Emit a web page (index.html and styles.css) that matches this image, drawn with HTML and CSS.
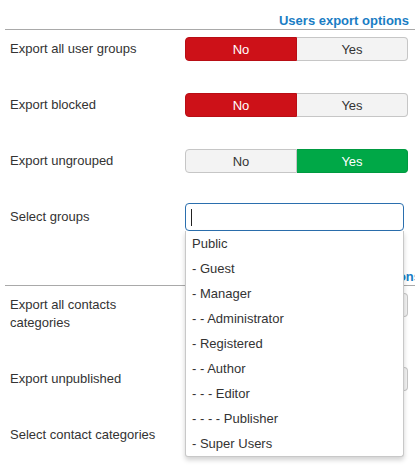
FILE: index.html
```html
<!DOCTYPE html>
<html>
<head>
<meta charset="utf-8">
<link rel="stylesheet" href="styles.css">
</head>
<body>
<div class="page">
  <section class="panel">
    <h3 class="legend">Users export options</h3>
    <div class="rows">
      <div class="row">
        <div class="label">Export all user groups</div>
        <div class="control">
          <div class="toggle"><span class="opt no">No</span><span class="opt">Yes</span></div>
        </div>
      </div>
      <div class="row">
        <div class="label">Export blocked</div>
        <div class="control">
          <div class="toggle"><span class="opt no">No</span><span class="opt">Yes</span></div>
        </div>
      </div>
      <div class="row">
        <div class="label">Export ungrouped</div>
        <div class="control">
          <div class="toggle"><span class="opt">No</span><span class="opt yes">Yes</span></div>
        </div>
      </div>
      <div class="row">
        <div class="label">Select groups</div>
        <div class="control">
          <div class="select">
            <div class="input focus"><span class="caret"></span></div>
            <ul class="dropdown">
              <li>Public</li>
              <li>- Guest</li>
              <li>- Manager</li>
              <li>- - Administrator</li>
              <li>- Registered</li>
              <li>- - Author</li>
              <li>- - - Editor</li>
              <li>- - - - Publisher</li>
              <li>- Super Users</li>
            </ul>
          </div>
        </div>
      </div>
    </div>
  </section>
  <section class="panel panel-second">
    <h3 class="legend">Contacts export options</h3>
    <div class="rows">
      <div class="row">
        <div class="label">Export all contacts categories</div>
        <div class="control">
          <div class="toggle"><span class="opt no">No</span><span class="opt">Yes</span></div>
        </div>
      </div>
      <div class="row">
        <div class="label">Export unpublished</div>
        <div class="control">
          <div class="toggle"><span class="opt no">No</span><span class="opt">Yes</span></div>
        </div>
      </div>
      <div class="row">
        <div class="label">Select contact categories</div>
        <div class="control">
          <div class="select">
            <div class="input"></div>
          </div>
        </div>
      </div>
    </div>
  </section>
</div>
</body>
</html>
```
FILE: styles.css
```css
html, body {
  margin: 0;
  padding: 0;
  background: #fff;
  overflow: hidden;
}
body {
  font-family: "Liberation Sans", Arial, sans-serif;
  font-size: 13px;
  color: #333;
}
.page {
  padding: 13px 0 0 5px;
  width: 410px;
}
.legend {
  margin: 0;
  font-size: 13px;
  font-weight: bold;
  line-height: 16px;
  color: #1a7dc4;
  text-align: right;
  padding-right: 6px;
  border-bottom: 1px solid #a9a9a9;
  white-space: nowrap;
}
.panel-second {
  margin-top: 34px;
}
.panel-second .legend {
  padding-right: 0;
  margin-right: -6px;
}
.rows {
  padding: 4px 0 0 5px;
}
.row {
  display: flex;
  align-items: flex-start;
  margin-bottom: 23px;
}
.label {
  width: 175px;
  flex: none;
  padding: 6px 20px 9px 0;
  line-height: 18px;
  box-sizing: border-box;
}
.control {
  width: 223px;
  flex: none;
}
.toggle {
  display: flex;
  margin-top: 3px;
  height: 24px;
}
.opt {
  flex: 1;
  box-sizing: border-box;
  border: 1px solid #c6c6c6;
  background: #f3f3f3;
  line-height: 23px;
  text-align: center;
  color: #333;
}
.opt:first-child {
  border-radius: 4px 0 0 4px;
}
.opt:last-child {
  border-radius: 0 4px 4px 0;
  border-left: 0;
}
.opt.no {
  background: #cd1118;
  border-color: #b80e15;
  color: #fff;
}
.opt.yes {
  background: #00a847;
  border-color: #009a41;
  color: #fff;
}
.select {
  position: relative;
  width: 219px;
  margin-top: 1px;
}
.input {
  height: 28px;
  box-sizing: border-box;
  border: 1px solid #ccc;
  border-radius: 4px;
  padding: 5px 5px;
  background: #fff;
}
.input.focus {
  border-color: #2b6fae;
}
.caret {
  display: block;
  width: 1px;
  height: 17px;
  background: #222;
}
.dropdown {
  position: absolute;
  top: 28px;
  left: 0;
  right: 0;
  margin: 0;
  padding: 0;
  list-style: none;
  background: #fff;
  border: 1px solid #c8c8c8;
  border-top: 0;
  border-radius: 0 0 3px 3px;
  box-shadow: 0 3px 5px rgba(0, 0, 0, 0.18);
  z-index: 10;
}
.dropdown li {
  box-sizing: border-box;
  height: 25px;
  padding-top: 1px;
  line-height: 24px;
  padding-left: 6px;
  color: #333;
}
```
